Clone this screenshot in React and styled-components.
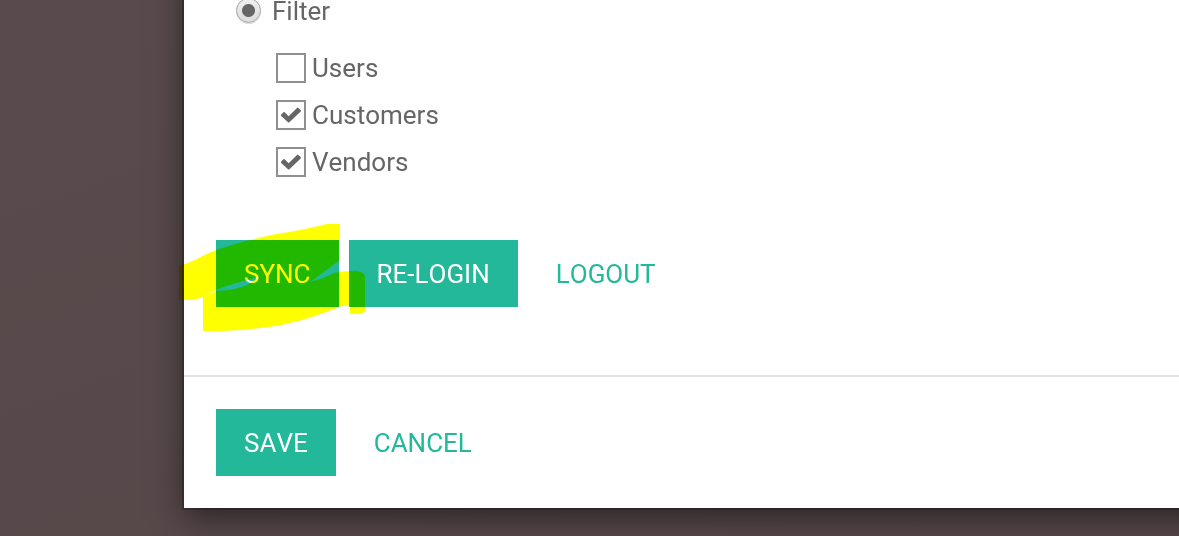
import React, { useState } from "react";
import styled, { createGlobalStyle } from "styled-components";

const GlobalStyle = createGlobalStyle`
  *, *::before, *::after { box-sizing: border-box; }
  body {
    margin: 0;
    background: #57494b;
    color: #666666;
    font: 400 26px/30px Roboto, "Liberation Sans", sans-serif;
    font-kerning: none;
  }
`;

const Backdrop = styled.div`
  min-height: 100vh;
  overflow: hidden;
  padding-left: 184px;
  background: linear-gradient(160deg, #594b4d, #564749);
`;

const Dialog = styled.div`
  margin: -40px -40px 28px 0;
  background: #ffffff;
  box-shadow: 0 0 0 2px rgba(0, 0, 0, 0.2), 0 10px 30px rgba(0, 0, 0, 0.5);
`;

const DialogBody = styled.form`
  padding: 36px 32px 68px;
`;

const RadioRow = styled.label`
  display: flex;
  align-items: center;
  gap: 11px;
  height: 29px;
  padding-left: 20px;
`;

const Radio = styled.input`
  appearance: none;
  flex: none;
  width: 25px;
  height: 25px;
  margin: 0;
  border: 1px solid #a6a6a6;
  border-radius: 50%;
  background: linear-gradient(#efefef, #dcdcdc);
  box-shadow: 0 1px 1px rgba(0, 0, 0, 0.15);

  &:checked {
    background: radial-gradient(circle, #666666 6px, transparent 7px),
      linear-gradient(#efefef, #dcdcdc);
  }
`;

const CheckList = styled.div`
  display: flex;
  flex-direction: column;
  align-items: flex-start;
  gap: 17px;
  margin: 28px 0 63px;
  padding-left: 60px;
`;

const CheckRow = styled.label`
  display: flex;
  align-items: center;
  gap: 6px;
`;

const CheckFrame = styled.span`
  display: grid;
  width: 30px;
  height: 30px;

  & > * { grid-area: 1 / 1; }
`;

const CheckInput = styled.input`
  appearance: none;
  width: 30px;
  height: 30px;
  margin: 0;
  border: 2px solid #8f8f8f;
  background: #ffffff;
`;

const Tick = styled.svg`
  pointer-events: none;
`;

const Actions = styled.div`
  display: flex;
  gap: 10px;
`;

const Button = styled.button`
  height: 67px;
  padding: 0 28px;
  border: 0;
  background: ${(p) => (p.$link ? "transparent" : "#22b899")};
  color: ${(p) => (p.$link ? "#22b899" : "#ffffff")};
  font: inherit;
  font-kerning: none;
  text-transform: uppercase;
  cursor: pointer;
`;

const SyncSpot = styled.div`
  position: relative;
  display: flex;
`;

const Highlighter = styled.svg`
  position: absolute;
  left: -37px;
  top: -17px;
  z-index: 1;
  mix-blend-mode: multiply;
  pointer-events: none;
`;

const DialogFooter = styled.footer`
  padding: 32px;
  border-top: 2px solid #e3e3e3;
`;

function CheckItem({ label, initial }) {
  const [on, setOn] = useState(initial);
  return (
    <CheckRow>
      <CheckFrame>
        <CheckInput type="checkbox" checked={on} onChange={() => setOn(!on)} />
        {on && (
          <Tick width="30" height="30" viewBox="0 0 30 30" aria-hidden="true">
            <path
              d="M5.2 14.6 7.4 12.2Q8 11.8 8.6 12.3L12.7 16.3 21 7.9Q21.7 7.3 22.4 7.9L24.7 10.1Q25.2 10.8 24.7 11.4L13.4 22.3Q12.7 22.8 12 22.3L5.2 15.9Q4.7 15.2 5.2 14.6Z"
              fill="#666666"
            />
          </Tick>
        )}
      </CheckFrame>
      {label}
    </CheckRow>
  );
}

export default function App() {
  return (
    <>
      <GlobalStyle />
      <Backdrop>
        <Dialog role="dialog" aria-label="Contact synchronization">
          <DialogBody>
            <RadioRow>
              <Radio type="radio" name="scope" defaultChecked />
              Filter
            </RadioRow>
            <CheckList>
              <CheckItem label="Users" initial={false} />
              <CheckItem label="Customers" initial />
              <CheckItem label="Vendors" initial />
            </CheckList>
            <Actions>
              <SyncSpot>
                <Button type="button">Sync</Button>
                <Highlighter width="188" height="110" viewBox="0 0 188 110" aria-hidden="true">
                  <path
                    d="M0 43 Q10 40 18 36 Q28 30 40 26 Q64 18 92 12 Q124 7 148 1 H161 V37 L131 59 Q146 55 155 50 Q162 48 178 48 Q185 49 186 53 V87 Q185 91 182 91 H171 V83 Q165 82 160 84 Q148 89 136 93 Q108 103 72 106 Q58 108 24 108 V74 Q18 76 13 77 H0Z M25 73 Q33 70 37 68 Q58 67 68 62 Q76 58 80 53 Q66 58 57 60 Q46 63 37 67 Q31 70 25 73Z"
                    fill="#ffff00"
                    fillRule="evenodd"
                  />
                </Highlighter>
              </SyncSpot>
              <Button type="button">Re-Login</Button>
              <Button type="button" $link>Logout</Button>
            </Actions>
          </DialogBody>
          <DialogFooter>
            <Actions>
              <Button type="button">Save</Button>
              <Button type="button" $link>Cancel</Button>
            </Actions>
          </DialogFooter>
        </Dialog>
      </Backdrop>
    </>
  );
}
